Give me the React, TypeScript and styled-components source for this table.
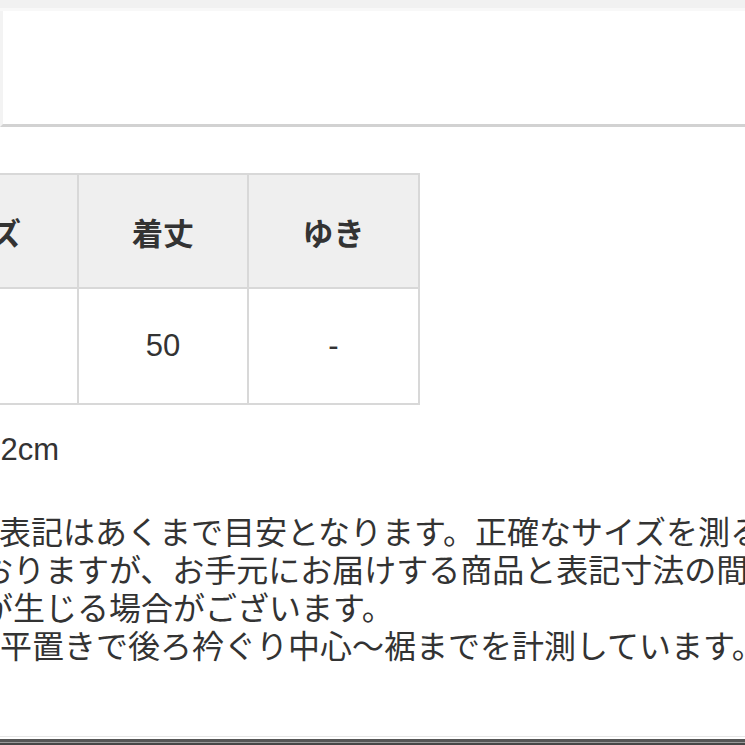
import styled, { createGlobalStyle } from 'styled-components';

const GlobalStyle = createGlobalStyle`
  html, body {
    margin: 0;
    padding: 0;
    background: #ffffff;
    overflow: hidden;
  }
  body {
    font-family: "Liberation Sans", "Noto Sans CJK JP", sans-serif;
    color: #333333;
  }
`;

const headers = ['サイズ', '着丈', 'ゆき'];
const values = ['F', '50', '-'];

const notes: { text: string; offset: number }[] = [
  { text: '※サイズ表記はあくまで目安となります。正確なサイズを測るよう努めて', offset: -128 },
  { text: 'おりますが、お手元にお届けする商品と表記寸法の間に若干の誤', offset: -19 },
  { text: 'が生じる場合がございます。', offset: -19 },
  { text: '※着丈は平置きで後ろ衿ぐり中心～裾までを計測しています。', offset: -128 },
];

export default function App() {
  return (
    <Page>
      <GlobalStyle />
      <TopBand />
      <TopBox />
      <SizeTable>
        {headers.map((h) => (
          <HeadCell key={h}>{h}</HeadCell>
        ))}
        {values.map((v, i) => (
          <BodyCell key={i}>{v}</BodyCell>
        ))}
      </SizeTable>
      <ModelLine>モデル身長：162cm</ModelLine>
      <Notes>
        {notes.map((n, i) => (
          <NoteLine key={i} $offset={n.offset}>
            {n.text}
          </NoteLine>
        ))}
      </Notes>
      <Footer>
        <FooterBar />
      </Footer>
    </Page>
  );
}

const Page = styled.div`
    width: 745px;
    height: 745px;
    overflow: hidden;
    display: flex;
    flex-direction: column;
  `,
  TopBand = styled.div`
    height: 8px;
    background: #f1f1f1;
    border-bottom: 3px solid #f8f8f8;
    flex: none;
  `,
  TopBox = styled.div`
    height: 113px;
    flex: none;
    background: #ffffff;
    border-left: 3px solid #f3f3f3;
    border-bottom: 3px solid #d2d2d2;
  `,
  SizeTable = styled.div`
    flex: none;
    align-self: flex-start;
    margin: 46px 0 0 -129px;
    display: grid;
    grid-template-columns: 204px 168px 169px;
    grid-template-rows: 112px 114px;
    gap: 2px;
    padding: 2px;
    background: #d8d8d8;
  `,
  HeadCell = styled.div`
    display: flex;
    align-items: center;
    justify-content: center;
    background: #efefef;
    font-family: "Noto Sans CJK JP", sans-serif;
    font-weight: 700;
    font-size: 31px;
    color: #333333;
  `,
  BodyCell = styled.div`
    display: flex;
    align-items: center;
    justify-content: center;
    background: #ffffff;
    font-size: 31px;
    color: #333333;
  `,
  ModelLine = styled.div`
    flex: none;
    margin: 26px 0 0 -220px;
    font-size: 31px;
    line-height: 38px;
    white-space: nowrap;
  `,
  Notes = styled.div`
    flex: none;
    margin-top: 42px;
    display: flex;
    flex-direction: column;
  `,
  NoteLine = styled.div<{ $offset: number }>`
    margin-left: ${(p) => p.$offset}px;
    font-family: "Noto Sans CJK JP", sans-serif;
    font-size: 32px;
    line-height: 38px;
    white-space: nowrap;
    color: #333333;
  `,
  Footer = styled.div`
    flex: none;
    margin-top: 73px;
    border-top: 1px solid #e6e6e6;
    padding-top: 2px;
  `,
  FooterBar = styled.div`
    height: 1px;
    background: #9a9a9a;
    border-top: 3px solid #565656;
    border-bottom: 3px solid #474747;
  `;
